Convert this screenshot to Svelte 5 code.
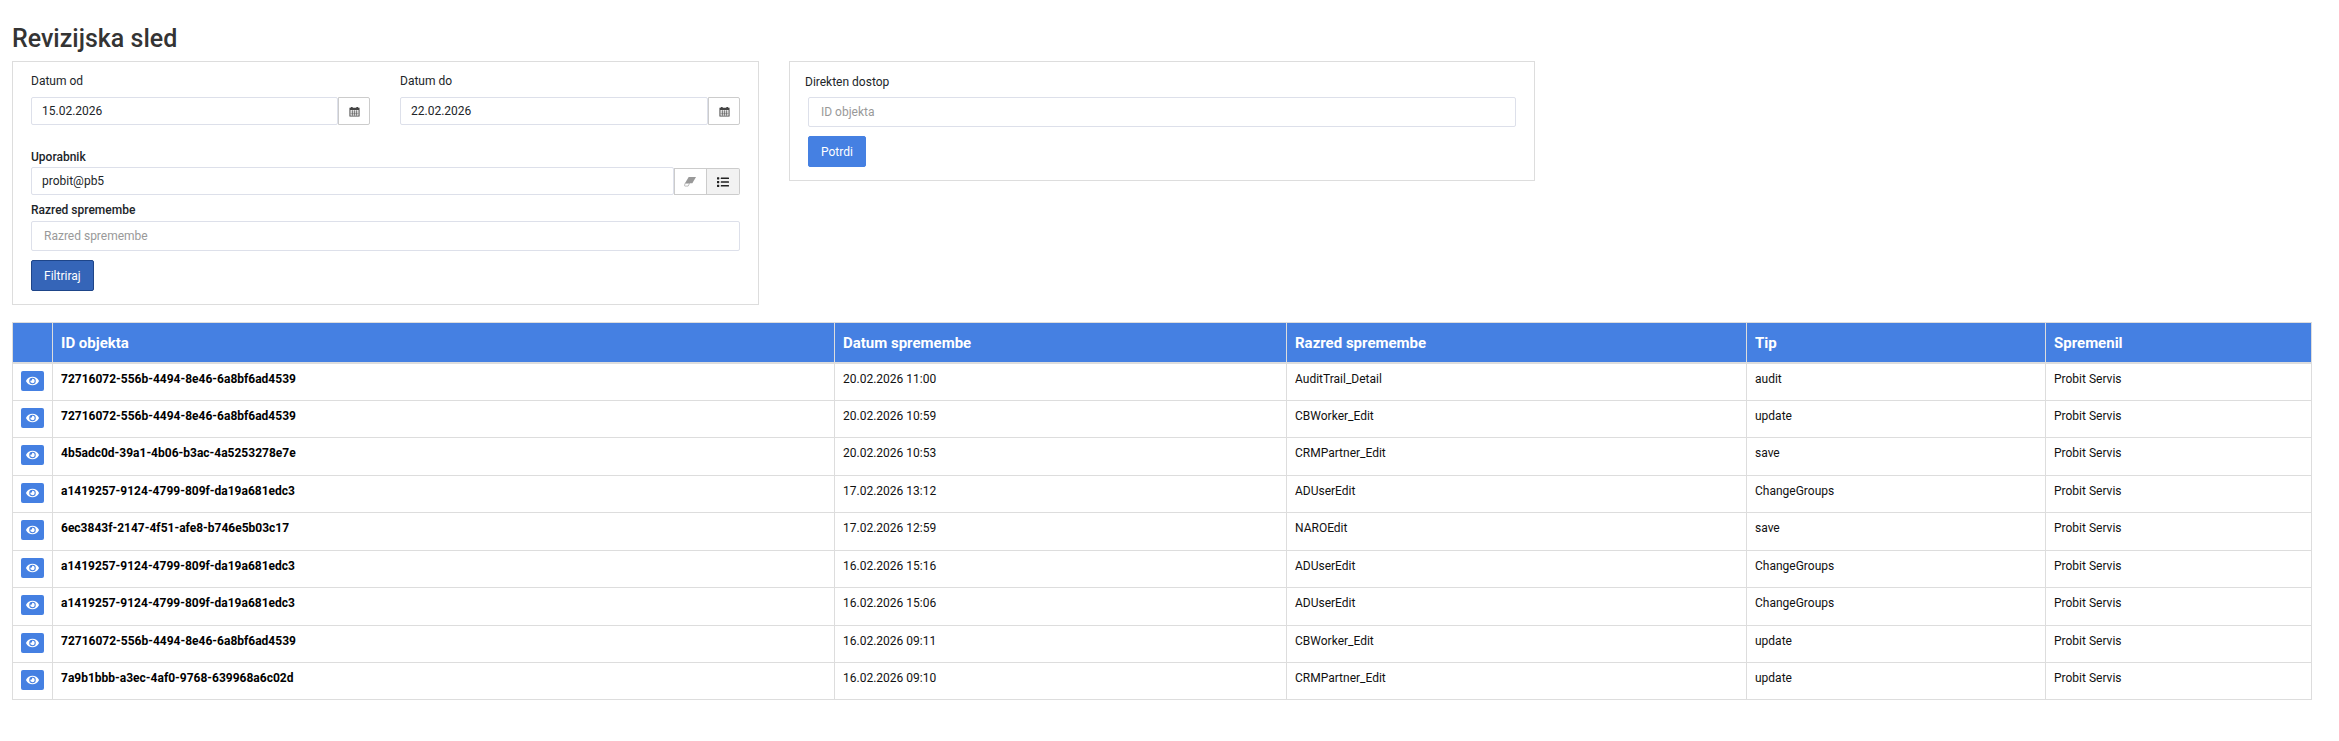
<script>
	const rows = [
		{ id: '72716072-556b-4494-8e46-6a8bf6ad4539', date: '20.02.2026 11:00', cls: 'AuditTrail_Detail', type: 'audit', user: 'Probit Servis' },
		{ id: '72716072-556b-4494-8e46-6a8bf6ad4539', date: '20.02.2026 10:59', cls: 'CBWorker_Edit', type: 'update', user: 'Probit Servis' },
		{ id: '4b5adc0d-39a1-4b06-b3ac-4a5253278e7e', date: '20.02.2026 10:53', cls: 'CRMPartner_Edit', type: 'save', user: 'Probit Servis' },
		{ id: 'a1419257-9124-4799-809f-da19a681edc3', date: '17.02.2026 13:12', cls: 'ADUserEdit', type: 'ChangeGroups', user: 'Probit Servis' },
		{ id: '6ec3843f-2147-4f51-afe8-b746e5b03c17', date: '17.02.2026 12:59', cls: 'NAROEdit', type: 'save', user: 'Probit Servis' },
		{ id: 'a1419257-9124-4799-809f-da19a681edc3', date: '16.02.2026 15:16', cls: 'ADUserEdit', type: 'ChangeGroups', user: 'Probit Servis' },
		{ id: 'a1419257-9124-4799-809f-da19a681edc3', date: '16.02.2026 15:06', cls: 'ADUserEdit', type: 'ChangeGroups', user: 'Probit Servis' },
		{ id: '72716072-556b-4494-8e46-6a8bf6ad4539', date: '16.02.2026 09:11', cls: 'CBWorker_Edit', type: 'update', user: 'Probit Servis' },
		{ id: '7a9b1bbb-a3ec-4af0-9768-639968a6c02d', date: '16.02.2026 09:10', cls: 'CRMPartner_Edit', type: 'update', user: 'Probit Servis' }
	];
</script>

{#snippet calendar()}
	<svg class="ico" viewBox="0 0 12 12" width="11" height="11">
		<path fill="#444" d="M2 1h2v1h4V1h2v1h1.5v9.5H.5V2H2z" />
		<path fill="#fff" d="M1.5 4.5h9v6h-9z" />
		<path fill="#555" d="M1.5 6.2h9v.7h-9zM1.5 8.2h9v.7h-9zM3.3 4.5h.7v6h-.7zM5.6 4.5h.7v6h-.7zM8 4.5h.7v6H8z" />
	</svg>
{/snippet}

<div class="page">
	<h1>Revizijska sled</h1>

	<div class="top">
		<form class="card filter">
			<div class="dates">
				<div>
					<label for="od">Datum od</label>
					<div class="group date">
						<input id="od" value="15.02.2026" />
						<button type="button" class="addon">{@render calendar()}</button>
					</div>
				</div>
				<div>
					<label for="do">Datum do</label>
					<div class="group date">
						<input id="do" value="22.02.2026" />
						<button type="button" class="addon">{@render calendar()}</button>
					</div>
				</div>
			</div>

			<label class="strong user-label" for="user">Uporabnik</label>
			<div class="group user">
				<input id="user" value="probit@pb5" />
				<button type="button" class="addon">
					<svg class="ico" viewBox="0 0 14 12" width="13" height="11">
						<path fill="#999" d="M5 1h8L9 8H1z" />
						<path fill="#fff" stroke="#999" stroke-width=".7" d="M1 8h5l-1.600 3H.8l-.3-.6z" />
					</svg>
				</button>
				<button type="button" class="addon active">
					<svg class="ico" viewBox="0 0 512 512" width="12" height="12">
						<path fill="#222" d="M80 368H16a16 16 0 0 0-16 16v64a16 16 0 0 0 16 16h64a16 16 0 0 0 16-16v-64a16 16 0 0 0-16-16zm0-320H16A16 16 0 0 0 0 64v64a16 16 0 0 0 16 16h64a16 16 0 0 0 16-16V64a16 16 0 0 0-16-16zm0 160H16a16 16 0 0 0-16 16v64a16 16 0 0 0 16 16h64a16 16 0 0 0 16-16v-64a16 16 0 0 0-16-16zm416 176H176a16 16 0 0 0-16 16v32a16 16 0 0 0 16 16h320a16 16 0 0 0 16-16v-32a16 16 0 0 0-16-16zm0-320H176a16 16 0 0 0-16 16v32a16 16 0 0 0 16 16h320a16 16 0 0 0 16-16V80a16 16 0 0 0-16-16zm0 160H176a16 16 0 0 0-16 16v32a16 16 0 0 0 16 16h320a16 16 0 0 0 16-16v-32a16 16 0 0 0-16-16z" />
					</svg>
				</button>
			</div>

			<label class="strong class-label" for="cls">Razred spremembe</label>
			<input id="cls" class="wide" placeholder="Razred spremembe" />
			<button type="button" class="btn pressed">Filtriraj</button>
		</form>

		<form class="card direct">
			<label for="oid">Direkten dostop</label>
			<div class="direct-body">
				<input id="oid" class="wide" placeholder="ID objekta" />
				<button type="button" class="btn">Potrdi</button>
			</div>
		</form>
	</div>

	<table>
		<colgroup>
			<col style="width: 40px" />
			<col style="width: 782px" />
			<col style="width: 452px" />
			<col style="width: 460px" />
			<col style="width: 299px" />
			<col />
		</colgroup>
		<thead>
			<tr>
				<th></th>
				<th>ID objekta</th>
				<th>Datum spremembe</th>
				<th>Razred spremembe</th>
				<th>Tip</th>
				<th>Spremenil</th>
			</tr>
		</thead>
		<tbody>
			{#each rows as row}
				<tr>
					<td class="action">
						<button type="button" class="view" aria-label="Poglej">
							<svg viewBox="0 0 576 512" width="13" height="12">
								<path fill="#fff" d="M572.52 241.4C518.29 135.59 410.93 64 288 64S57.68 135.64 3.48 241.41a32.35 32.35 0 0 0 0 29.19C57.71 376.41 165.07 448 288 448s230.32-71.64 284.52-177.41a32.35 32.35 0 0 0 0-29.19zM288 400a144 144 0 1 1 144-144 143.93 143.93 0 0 1-144 144zm0-240a95.31 95.31 0 0 0-25.31 3.79 47.85 47.85 0 0 1-66.9 66.9A95.78 95.78 0 1 0 288 160z" />
							</svg>
						</button>
					</td>
					<td class="oid">{row.id}</td>
					<td>{row.date}</td>
					<td>{row.cls}</td>
					<td>{row.type}</td>
					<td>{row.user}</td>
				</tr>
			{/each}
		</tbody>
	</table>
</div>

<style>
	:global(body) {
		background: #fff;
		font-family: Roboto, sans-serif;
		font-size: 12px;
		color: #212529;
	}

	.page {
		padding: 25px 27px 0 12px;
	}

	h1 {
		margin: 0 0 8px;
		font-size: 25px;
		line-height: 28px;
		font-weight: 500;
		color: #343434;
	}

	.top {
		display: flex;
		align-items: flex-start;
		gap: 30px;
		margin-bottom: 17px;
	}

	.card {
		box-sizing: border-box;
		border: 1px solid #ddd;
		background: #fff;
	}

	.filter {
		width: 747px;
		padding: 12px 18px 13px;
	}

	.direct {
		width: 746px;
		height: 120px;
		padding: 13px 18px 0 15px;
	}

	.direct-body {
		padding: 8px 0 0 3px;
	}

	label {
		display: block;
		line-height: 14px;
		color: #212529;
	}

	.strong {
		font-weight: 500;
	}

	.dates {
		display: grid;
		grid-template-columns: 339px 340px;
		gap: 30px;
	}

	.dates label {
		margin-bottom: 9px;
	}

	.group {
		display: flex;
	}

	input {
		box-sizing: border-box;
		min-width: 0;
		flex: 1;
		margin: 0;
		padding: 0 10px;
		border: 1px solid #dde0ea;
		border-radius: 2px;
		outline: none;
		background: #fff;
		font: 12px Roboto, sans-serif;
		color: #212529;
	}

	input::placeholder {
		color: #999;
	}

	.date {
		height: 28px;
	}

	.user-label {
		margin-top: 25px;
		margin-bottom: 3px;
	}

	.user {
		height: 28px;
	}

	.class-label {
		margin-top: 8px;
		margin-bottom: 4px;
	}

	.wide {
		display: block;
		width: 100%;
		height: 30px;
		padding: 0 12px;
	}

	.addon {
		box-sizing: border-box;
		display: flex;
		align-items: center;
		justify-content: center;
		width: 32px;
		padding: 0;
		border: 1px solid #ccc;
		border-radius: 0 2px 2px 0;
		background: #fff;
	}

	.user .addon {
		width: 33px;
		margin-top: 1px;
		border-radius: 0;
	}

	.user .active {
		background: #f2f2f2;
		border-left: 0;
		border-radius: 0 2px 2px 0;
	}

	.btn {
		display: block;
		box-sizing: border-box;
		height: 31px;
		margin-top: 9px;
		padding: 0 12px;
		border: 1px solid #4580e2;
		border-radius: 2px;
		background: #4580e2;
		font: 12px Roboto, sans-serif;
		color: #fff;
	}

	.pressed {
		background: #3565b8;
		border-color: #1e4589;
	}

	table {
		box-sizing: border-box;
		width: 2300px;
		border-collapse: collapse;
		table-layout: fixed;
	}

	th {
		height: 39px;
		padding: 0 8px;
		border: 1px solid #ddd;
		border-bottom-width: 2px;
		background: #4580e2;
		text-align: left;
		font-size: 15px;
		font-weight: 700;
		color: #fff;
	}

	thead th + th {
		border-left-color: #fff;
	}

	td {
		height: 37.45px;
		padding: 8px 8px 0;
		box-sizing: border-box;
		border: 1px solid #ddd;
		vertical-align: top;
		line-height: 14px;
		color: #111;
	}

	.oid {
		font-weight: 700;
		color: #000;
	}

	td.action {
		padding: 7px 0 0 8px;
	}

	.view {
		display: flex;
		align-items: center;
		justify-content: center;
		box-sizing: border-box;
		width: 23px;
		height: 20px;
		padding: 0;
		border: 0;
		border-radius: 2px;
		background: #4580e2;
	}

	.ico {
		display: block;
	}
</style>
